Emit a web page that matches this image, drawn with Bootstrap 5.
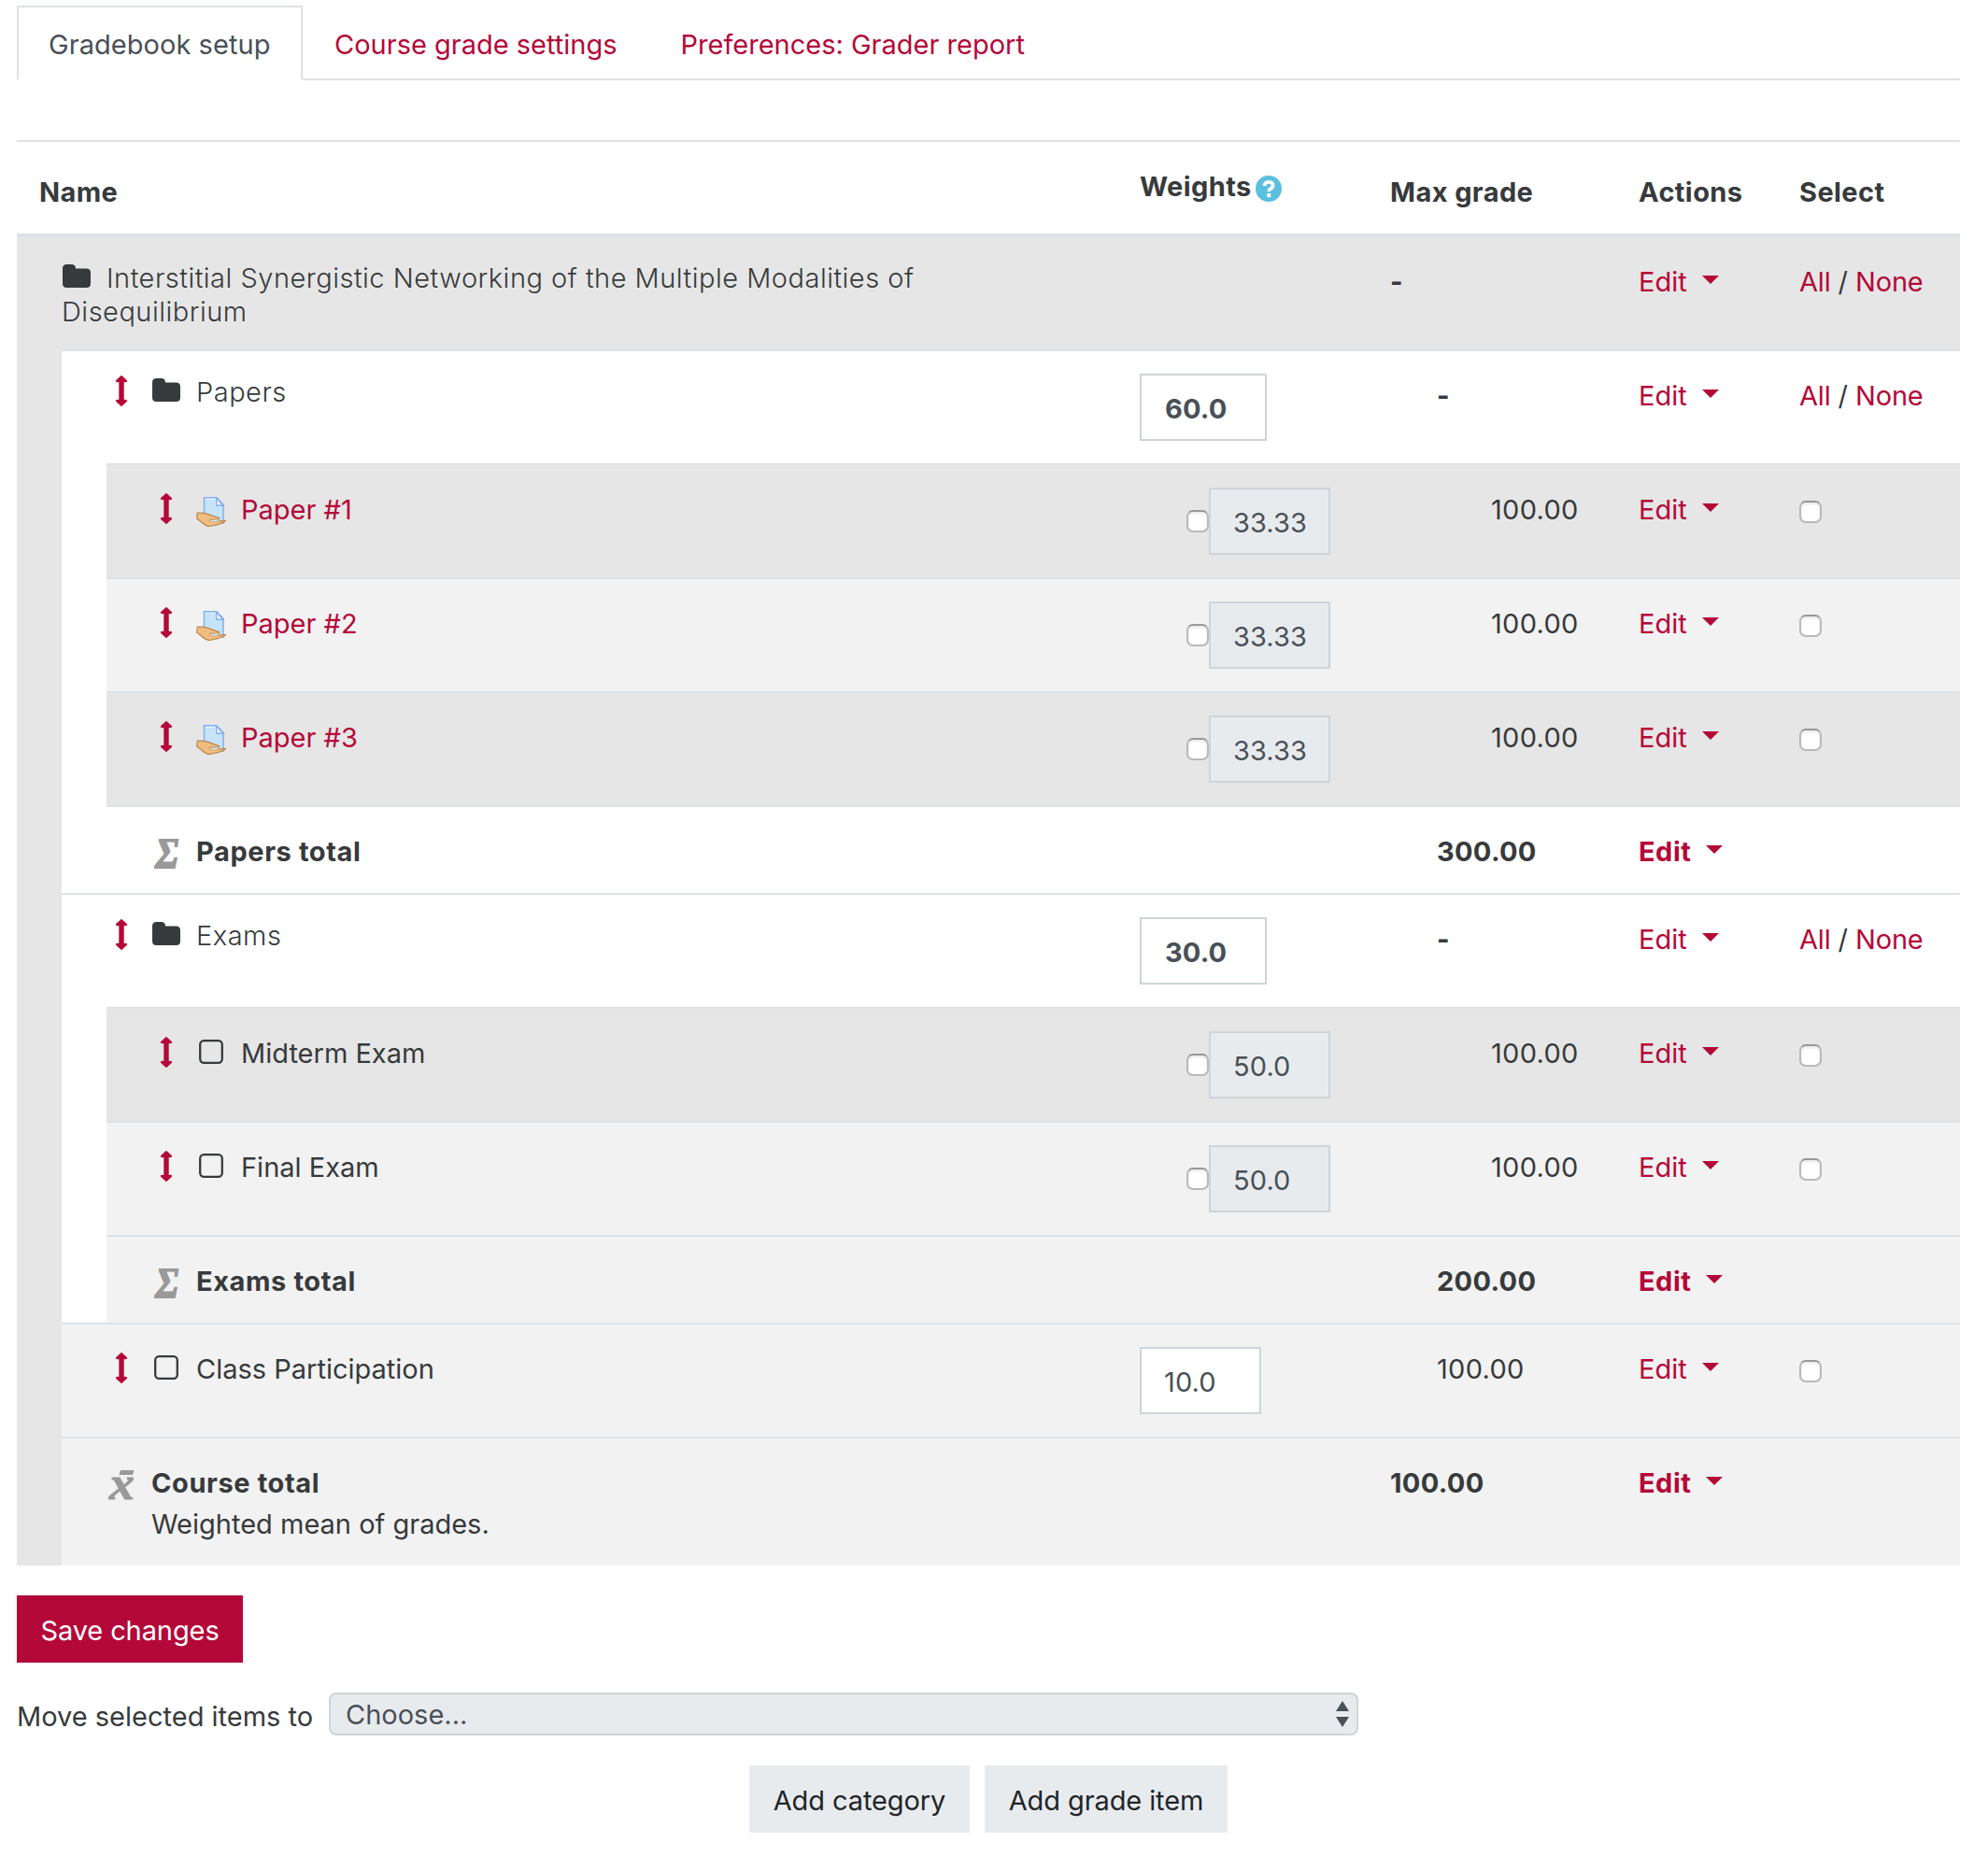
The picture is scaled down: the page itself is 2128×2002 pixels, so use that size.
<!DOCTYPE html>
<html lang="en">
<head>
<meta charset="utf-8">
<title>Gradebook setup</title>
<link href="https://cdn.jsdelivr.net/npm/bootstrap@5.3.0/dist/css/bootstrap.min.css" rel="stylesheet">
<style>
  :root { --brand: #b40839; --ink: #373a3c; --line: #dee2e6; }
  body { font-family: Inter, "Liberation Sans", sans-serif; font-size: 29px; line-height: 45px; letter-spacing: 0; color: var(--ink); background: #fff; }
  a { color: var(--brand); text-decoration: none; }
  .page { padding: 6px 30px 0 18px; }

  .nav-tabs { height: 80px; border-bottom: 2px solid var(--line); }
  .nav-tabs .nav-link { height: 80px; padding: 17px 32px 15px; border: 2px solid transparent; border-radius: 0; margin-bottom: -2px; color: var(--brand); }
  .nav-tabs .nav-link.active { width: 306px; white-space: nowrap; letter-spacing: .05px; color: #495057; border-color: var(--line) var(--line) #fff; }

  .grades { table-layout: fixed; width: 2080px; margin: 64px 0 0; border-collapse: separate; border-spacing: 0; color: var(--ink); }
  .grades > :not(caption) > * > * { padding: 25px 0 0 24px; background: transparent; box-shadow: none; border: 0; border-top: 2px solid var(--line); vertical-align: top; color: inherit; }
  .grades > tbody > tr > td:has(.weight), .grades > tbody > tr > td:has(.tick) { padding-top: 24px; }
  .grades thead th { height: 104px; border-bottom: 4px solid var(--line) !important; font-weight: 700; letter-spacing: .4px; padding-bottom: 22px !important; vertical-align: bottom !important; }
  .grades thead th.weights-head { vertical-align: top !important; }
  .grades tbody tr { height: 122px; }
  .grades tbody tr.root-row { height: 120px; }
  .grades tbody tr.root-row > td { border-top: 0; }
  .grades tbody tr.total-row { height: 94px; font-weight: 700; }
  .grades tbody tr.course-row { height: 138px; }
  .grades tbody td.name-cell { padding-left: 48px; }
  .grades tbody td.spine { border-top: 0; padding: 0; }
  .grades .tone-dark > td, .grades td.tone-dark { background: #e6e6e6; }
  .grades .tone-mid > td { background: #f2f2f2; }
  .grades .tone-light > td, .grades td.tone-light { background: #fff; }
  .grades tr > td.spine.tone-dark { background: #e6e6e6; }
  .grades tr > td.spine.tone-light { background: #fff; }
  .cat-title { font-weight: 300; line-height: 36px; letter-spacing: .5px; padding-top: 1px; }
  .max-1 { padding-left: 74px !important; }
  .max-2 { padding-left: 132px !important; }
  .num { letter-spacing: .3px; }
  .dash { font-weight: 700; }
  .total-label { letter-spacing: .6px; }
  .total-row .edit, .fw-bold .edit { letter-spacing: .5px; }
  .course-note { margin-top: -1px; }

  .ico { width: 32px; flex: none; margin-right: 16px; display: block; }
  .ico-move { height: 33px; margin-top: 5px; fill: var(--brand); }
  .ico-folder { height: 25px; margin-top: 3px; fill: var(--ink); }
  .ico-item { height: 26px; margin-top: 8px; }
  .ico-assign, .ico-calc { height: 32px; margin-top: 9px; }
  .cat-title .ico-move { margin-top: 0; }
  .root-row .ico-folder { display: inline-block; margin-top: 0; vertical-align: 0; }
  .ico-help { width: 28px; height: 28px; margin: 4px 0 0 4px; }

  .edit::after { content: ""; display: inline-block; margin-left: 16px; vertical-align: 8px; border-top: 9px solid; border-left: 9px solid transparent; border-right: 9px solid transparent; }
  .weight { width: 130px; height: 72px; border: 2px solid #ced4da; border-radius: 0; padding: 3px 0 0 24px; font-size: 29px; line-height: 45px; color: #495057; background: #fff; letter-spacing: .1px; }
  .weight.override { width: 136px; padding-left: 25px; font-weight: 700; }
  .weight:disabled { background: #e8ebee; border-color: #ced4da; color: #495057; opacity: 1; }
  .tick { appearance: none; flex: none; display: block; width: 24px; height: 24px; border: 2px solid #b9b9b9; border-top-color: #989898; border-radius: 7px; background: #fff; box-shadow: inset 0 2px 3px #e8e8e8; margin: 0; }
  .weight-group { margin-left: 50px; }
  .weight-group .tick { margin-top: 24px; }
  .pick { margin: 14px 0 0; }
  .select-links { letter-spacing: -.15px; }

  .btn { height: 72px; border: 0; border-radius: 0; padding: 3px 0 0; font-size: 29px; line-height: 45px; letter-spacing: -.1px; }
  .btn-save { width: 242px; background: var(--brand); color: #fff; margin-top: 32px; }
  .btn-plain { background: #e8ebee; color: #212529; }
  .btn-category { width: 236px; }
  .btn-item { width: 260px; }
  .move-bar { margin-top: 32px; height: 46px; }
  .move-bar label { width: 334px; padding-top: 3px; white-space: nowrap; }
  .choose { width: 1102px; height: 46px; border: 2px solid #ced4da; border-radius: 8px; background: #e8ebee; color: #495057; padding: 0 8px 0 16px; }
  .choose svg { width: 14px; height: 28px; fill: #495057; }
  .add-bar { margin: 32px 0 0 784px; gap: 16px; }
</style>
</head>
<body>
<svg class="d-none" xmlns="http://www.w3.org/2000/svg">
  <symbol id="move" viewBox="-10.5 0 32 33">
    <path d="M5.500 0 11.300 5.200Q11.900 6.800 10.400 6.900H8V26.100H10.400Q11.900 26.200 11.300 27.800L5.500 33-.3 27.800Q-.9 26.200.6 26.100H3V6.900H.6Q-.9 6.800-.3 5.200Z" stroke="#b40839" stroke-width=".4"/>
  </symbol>
  <symbol id="folder" viewBox="0 0 32 25">
    <path d="M1 4.500Q1 0 5.500 0h5Q15 0 15 4.500h11.500Q31 4.500 31 9v11.500Q31 25 26.500 25h-21Q1 25 1 20.500Z"/>
  </symbol>
  <symbol id="item" viewBox="0 0 32 26">
    <rect x="4.200" y="1.200" width="23.600" height="23.600" rx="4" fill="none" stroke="#373a3c" stroke-width="2.300"/>
  </symbol>
  <symbol id="assign" viewBox="0 0 32 32">
    <path d="M8.500.8h13.200l7.300 7.400V28H8.500Z" fill="#c5e4fa" stroke="#82aef0" stroke-width="1.500"/>
    <path d="M10 2.200h10.500v7.500H28" fill="none" stroke="#e8f6ff" stroke-width="1"/>
    <path d="M21.500 1v8.200H29Z" fill="#eaf6ff" stroke="#82aef0" stroke-width="1.500"/>
    <path d="M1.300 17.200Q7 16.600 12.500 18.400L24.500 22.600Q25.500 23.800 23.500 24L15 24.300Q14 25.300 15.500 26L31.400 25.600Q31 27.200 24 29.300L14 31.500Q11 31.500 6 27.300L.6 23Z" fill="#efbd80" stroke="#b98850" stroke-width="1.200" stroke-linejoin="round"/>
    <path d="M15 24.800H26L21 26.300H15.500Z" fill="#d5ecfb"/>
  </symbol>
  <symbol id="sum" viewBox="0 0 32 32">
    <text x="4.500" y="31" font-family="Liberation Serif, serif" font-size="46" font-weight="700" font-style="italic" fill="#999" stroke="#999" stroke-width="2" textLength="25" lengthAdjust="spacingAndGlyphs">Σ</text>
  </symbol>
  <symbol id="mean" viewBox="0 0 32 32">
    <text x="3" y="31" font-family="Liberation Serif, serif" font-size="50" font-weight="700" font-style="italic" fill="#999" stroke="#999" stroke-width="1" textLength="27" lengthAdjust="spacingAndGlyphs">x</text>
    <path d="M15 0h14.500l-1.500 5H13.500Z" fill="#999"/>
  </symbol>
</svg>

<main class="page">
  <ul class="nav nav-tabs">
    <li class="nav-item"><a class="nav-link active" href="#">Gradebook setup</a></li>
    <li class="nav-item"><a class="nav-link" href="#">Course grade settings</a></li>
    <li class="nav-item"><a class="nav-link" href="#">Preferences: Grader report</a></li>
  </ul>

  <table class="table grades">
    <colgroup><col style="width:48px"><col style="width:48px"><col style="width:1082px"><col style="width:268px"><col style="width:266px"><col style="width:172px"><col style="width:196px"></colgroup>
    <thead>
      <tr>
        <th colspan="3">Name</th>
        <th class="weights-head"><span class="d-flex align-items-center">Weights<svg class="ico-help" viewBox="0 0 28 28"><circle cx="14" cy="14" r="14" fill="#5bc0de"/><path d="M9.300 10.800Q10.200 6.800 14.300 6.800 18.600 7 18.600 10.500 18.600 12.600 16.400 13.800 14.200 15 14.200 17" fill="none" stroke="#fff" stroke-width="3.600"/><path d="M12.200 19h4v4.200h-4Z" fill="#fff"/></svg></span></th>
        <th>Max grade</th><th>Actions</th><th>Select</th>
      </tr>
    </thead>
    <tbody>
      <tr class="root-row tone-dark">
        <td colspan="3" class="name-cell"><div class="cat-title"><svg class="ico ico-folder"><use href="#folder"/></svg>Interstitial Synergistic Networking of the Multiple Modalities of<br>Disequilibrium</div></td>
        <td></td><td class="dash">-</td><td><a class="edit" href="#">Edit</a></td><td class="select-links"><a href="#">All</a> / <a href="#">None</a></td>
      </tr>
      <tr class="tone-light">
        <td class="spine tone-dark" rowspan="11"></td>
        <td colspan="2" class="name-cell"><div class="cat-title d-flex"><svg class="ico ico-move"><use href="#move"/></svg><svg class="ico ico-folder"><use href="#folder"/></svg>Papers</div></td>
        <td><input class="weight override d-block" value="60.0"></td><td class="max-1 dash">-</td><td><a class="edit" href="#">Edit</a></td><td class="select-links"><a href="#">All</a> / <a href="#">None</a></td>
      </tr>
      <tr class="tone-dark">
        <td class="spine tone-light" rowspan="4"></td>
        <td class="name-cell"><div class="d-flex"><svg class="ico ico-move"><use href="#move"/></svg><svg class="ico ico-assign"><use href="#assign"/></svg><a href="#">Paper #1</a></div></td>
        <td><div class="weight-group d-flex"><input type="checkbox" class="tick"><input class="weight" value="33.33" disabled></div></td><td class="max-2 num">100.00</td><td><a class="edit" href="#">Edit</a></td><td><input type="checkbox" class="tick pick"></td>
      </tr>
      <tr class="tone-mid">
        <td class="name-cell"><div class="d-flex"><svg class="ico ico-move"><use href="#move"/></svg><svg class="ico ico-assign"><use href="#assign"/></svg><a href="#">Paper #2</a></div></td>
        <td><div class="weight-group d-flex"><input type="checkbox" class="tick"><input class="weight" value="33.33" disabled></div></td><td class="max-2 num">100.00</td><td><a class="edit" href="#">Edit</a></td><td><input type="checkbox" class="tick pick"></td>
      </tr>
      <tr class="tone-dark">
        <td class="name-cell"><div class="d-flex"><svg class="ico ico-move"><use href="#move"/></svg><svg class="ico ico-assign"><use href="#assign"/></svg><a href="#">Paper #3</a></div></td>
        <td><div class="weight-group d-flex"><input type="checkbox" class="tick"><input class="weight" value="33.33" disabled></div></td><td class="max-2 num">100.00</td><td><a class="edit" href="#">Edit</a></td><td><input type="checkbox" class="tick pick"></td>
      </tr>
      <tr class="total-row tone-light">
        <td class="name-cell"><div class="d-flex total-label"><svg class="ico ico-calc"><use href="#sum"/></svg>Papers total</div></td>
        <td></td><td class="max-1 num">300.00</td><td><a class="edit" href="#">Edit</a></td><td></td>
      </tr>
      <tr class="tone-light">
        <td colspan="2" class="name-cell"><div class="cat-title d-flex"><svg class="ico ico-move"><use href="#move"/></svg><svg class="ico ico-folder"><use href="#folder"/></svg>Exams</div></td>
        <td><input class="weight override d-block" value="30.0"></td><td class="max-1 dash">-</td><td><a class="edit" href="#">Edit</a></td><td class="select-links"><a href="#">All</a> / <a href="#">None</a></td>
      </tr>
      <tr class="tone-dark">
        <td class="spine tone-light" rowspan="3"></td>
        <td class="name-cell"><div class="d-flex"><svg class="ico ico-move"><use href="#move"/></svg><svg class="ico ico-item"><use href="#item"/></svg>Midterm Exam</div></td>
        <td><div class="weight-group d-flex"><input type="checkbox" class="tick"><input class="weight" value="50.0" disabled></div></td><td class="max-2 num">100.00</td><td><a class="edit" href="#">Edit</a></td><td><input type="checkbox" class="tick pick"></td>
      </tr>
      <tr class="tone-mid">
        <td class="name-cell"><div class="d-flex"><svg class="ico ico-move"><use href="#move"/></svg><svg class="ico ico-item"><use href="#item"/></svg>Final Exam</div></td>
        <td><div class="weight-group d-flex"><input type="checkbox" class="tick"><input class="weight" value="50.0" disabled></div></td><td class="max-2 num">100.00</td><td><a class="edit" href="#">Edit</a></td><td><input type="checkbox" class="tick pick"></td>
      </tr>
      <tr class="total-row tone-mid">
        <td class="name-cell"><div class="d-flex total-label"><svg class="ico ico-calc"><use href="#sum"/></svg>Exams total</div></td>
        <td></td><td class="max-1 num">200.00</td><td><a class="edit" href="#">Edit</a></td><td></td>
      </tr>
      <tr class="tone-mid">
        <td colspan="2" class="name-cell"><div class="d-flex"><svg class="ico ico-move"><use href="#move"/></svg><svg class="ico ico-item"><use href="#item"/></svg>Class Participation</div></td>
        <td><input class="weight d-block" value="10.0"></td><td class="max-1 num">100.00</td><td><a class="edit" href="#">Edit</a></td><td><input type="checkbox" class="tick pick"></td>
      </tr>
      <tr class="course-row tone-mid">
        <td colspan="2" class="name-cell"><div class="d-flex"><svg class="ico ico-calc"><use href="#mean"/></svg><div><div class="fw-bold total-label">Course total</div><div class="course-note">Weighted mean of grades.</div></div></div></td>
        <td></td><td class="fw-bold num">100.00</td><td class="fw-bold"><a class="edit" href="#">Edit</a></td><td></td>
      </tr>
    </tbody>
  </table>

  <button class="btn btn-save d-block">Save changes</button>
  <div class="move-bar d-flex">
    <label>Move selected items to</label>
    <div class="choose d-flex align-items-center justify-content-between"><span>Choose...</span><svg viewBox="0 0 14 28"><path d="M7 0l7 11H0ZM7 28l7-11H0Z"/></svg></div>
  </div>
  <div class="add-bar d-flex">
    <button class="btn btn-plain btn-category">Add category</button>
    <button class="btn btn-plain btn-item">Add grade item</button>
  </div>
</main>
<script src="https://cdn.jsdelivr.net/npm/bootstrap@5.3.0/dist/js/bootstrap.bundle.min.js"></script>
</body>
</html>
